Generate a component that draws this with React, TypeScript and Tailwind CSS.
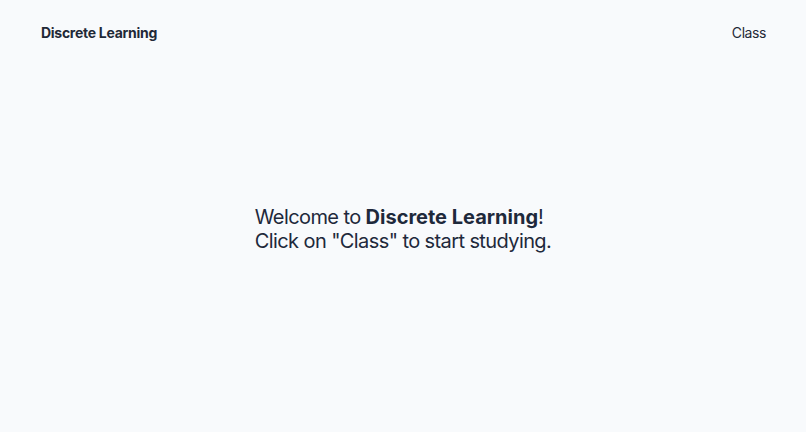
import React from 'react';

export default function App() {
  return (
    <div className="min-h-screen h-[432px] flex flex-col bg-[#f8fafc] text-[#1e293b] font-['Inter','Liberation_Sans',sans-serif]">
      <header className="h-16 flex items-center justify-between pl-[41px] pr-10 shrink-0">
        <a className="text-[14px] font-bold text-[#1f2937] tracking-[-0.02em]">Discrete Learning</a>
        <nav>
          <a className="text-[14px] text-[#1f2937] tracking-[-0.03em]">Class</a>
        </nav>
      </header>
      <main className="flex-1 flex items-center justify-center pb-[38px]">
        <p className="text-[20px] leading-[24px] tracking-[-0.03em] text-[#1e293b]">
          Welcome to <strong className="font-bold tracking-normal">Discrete Learning</strong>!
          <br />
          Click on "Class" to start studying.
        </p>
      </main>
    </div>
  );
}
